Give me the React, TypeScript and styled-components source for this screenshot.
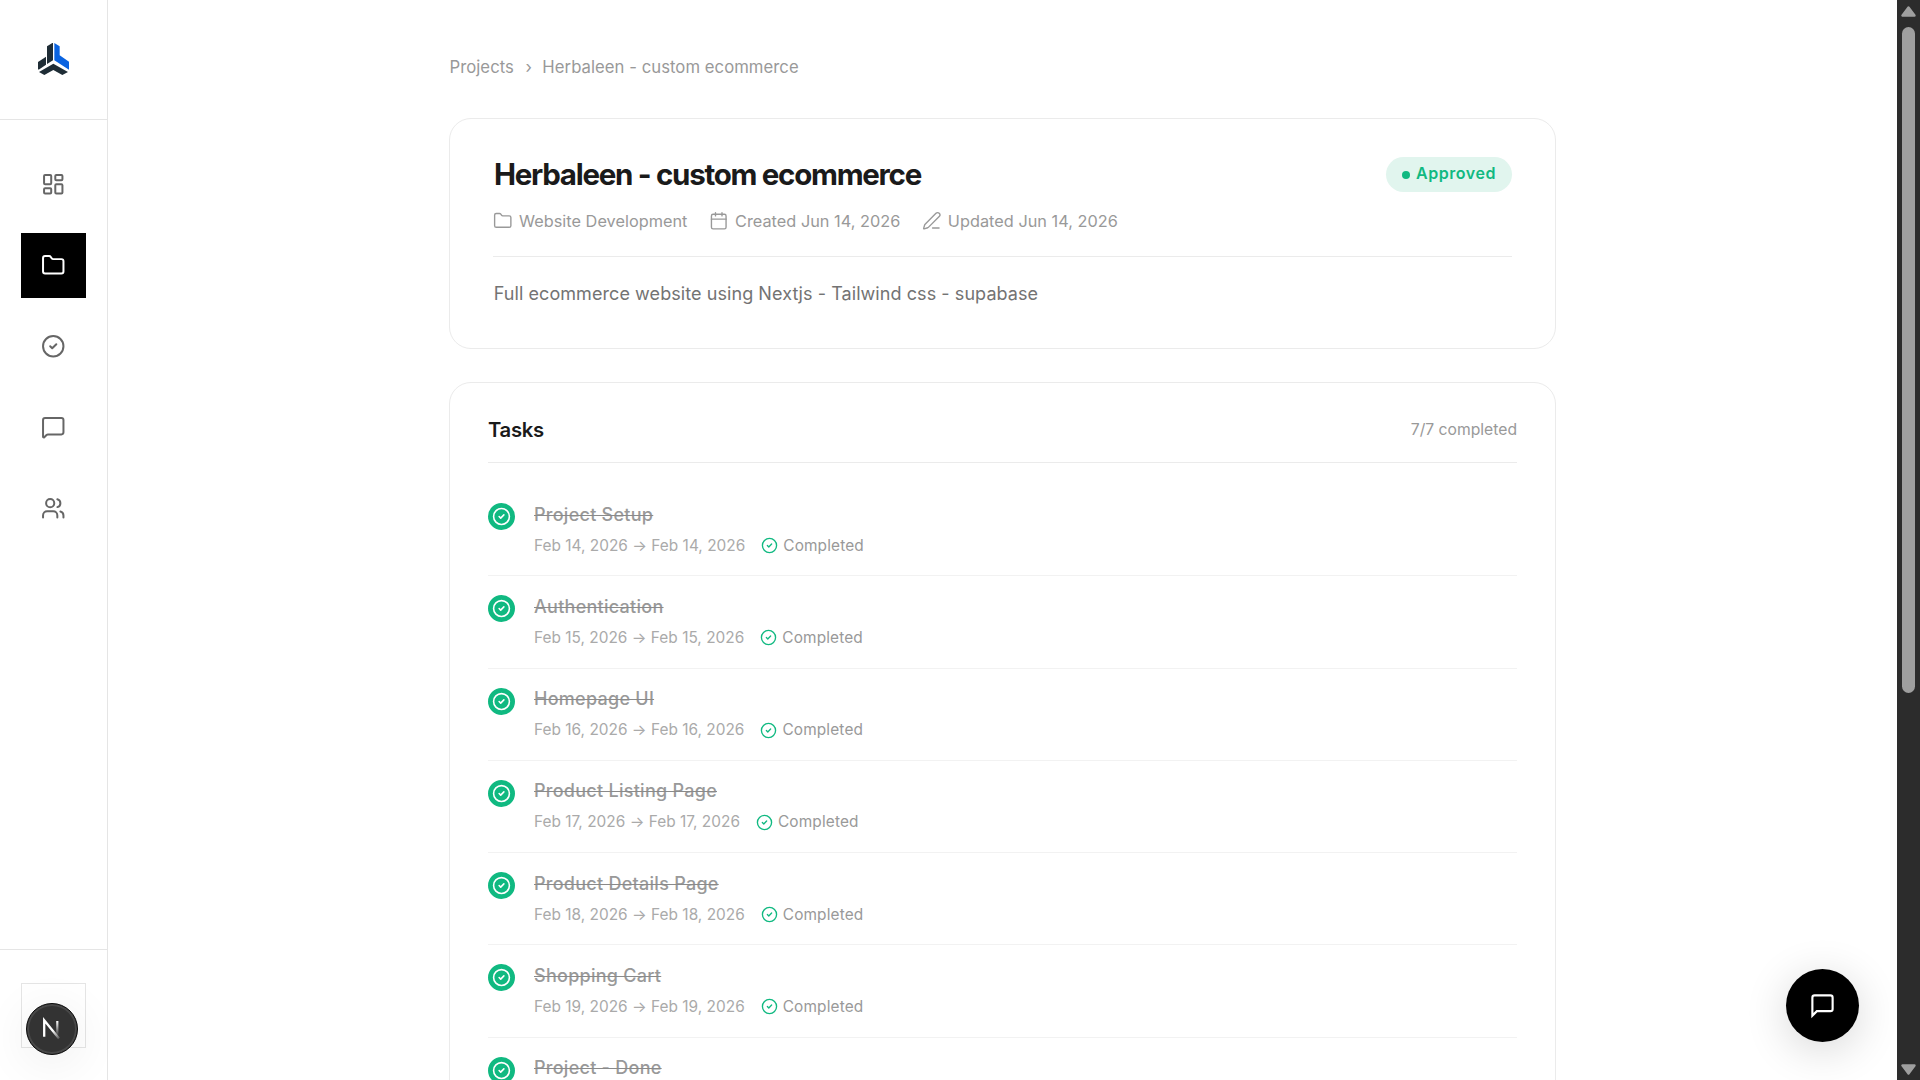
import React from "react";
import styled, { createGlobalStyle, css } from "styled-components";
import {
  Calendar,
  CircleCheck,
  Folder,
  LayoutDashboard,
  MessageSquare,
  PenLine,
  Users,
} from "lucide-react";

const GlobalStyle = createGlobalStyle`
  *, *::before, *::after { box-sizing: border-box; }
  body {
    margin: 0;
    background: #fff;
    font-family: Inter, "Liberation Sans", sans-serif;
    overflow: hidden;
  }
  svg { display: block; flex: none; }
`;

const Shell = styled.div`
  display: grid;
  grid-template-columns: 108px 1fr 23px;
  grid-template-rows: 1080px;
  height: 1080px;
  overflow: hidden;
`;

/* Sidebar */

const Sidebar = styled.aside`
  display: flex;
  flex-direction: column;
  border-right: 1px solid #e5e5e5;
`;

const Brand = styled.div`
  display: flex;
  align-items: center;
  justify-content: center;
  height: 120px;
  padding-bottom: 1px;
  border-bottom: 1px solid #e5e5e5;
`;

const Nav = styled.nav`
  display: flex;
  flex: 1;
  flex-direction: column;
  align-items: center;
  gap: 16px;
  padding-top: 32px;
`;

const NavButton = styled.a<{ $active?: boolean }>`
  display: flex;
  align-items: center;
  justify-content: center;
  width: 65px;
  height: 65px;
  color: #666;
  ${(p) =>
    p.$active &&
    css`
      background: #000;
      color: #fff;
    `}
`;

const SidebarFooter = styled.div`
  display: flex;
  justify-content: center;
  height: 131px;
  padding-top: 33px;
  border-top: 1px solid #e5e5e5;
`;

const AvatarBox = styled.div`
  position: relative;
  width: 65px;
  height: 65px;
  border: 1px solid #e5e5e5;
`;

const DevBadge = styled.div`
  position: absolute;
  top: 18.5px;
  left: 3.5px;
  width: 52px;
  height: 52px;
  border: 1px solid #0c0c0c;
  border-radius: 50%;
  background: #333;
  box-shadow: inset 0 0 0 2px #484848, 0 8px 46px 6px rgba(0, 0, 0, 0.055);
`;

/* Page */

const Main = styled.main`
  display: flex;
  flex-direction: column;
  width: 1107px;
  margin: 0 auto;
  padding-top: 55px;
`;

const Breadcrumb = styled.nav`
  display: flex;
  margin-bottom: 39px;
  padding-left: 0.5px;
  color: #999;
  font-size: 16.7px;
  line-height: 24px;
  letter-spacing: 0.04px;
`;

const Separator = styled.span`
  margin: 0 10.5px 0 11.5px;
`;

const Card = styled.section`
  flex: none;
  border: 1px solid #ebebeb;
  border-radius: 22px;
`;

const ProjectCard = styled(Card)`
  height: 231px;
  margin-bottom: 33px;
  padding: 38px 43px 0;
`;

const ProjectHeader = styled.header`
  display: flex;
  justify-content: space-between;
  height: 35px;
`;

const Title = styled.h1`
  margin: 0;
  padding-left: 1px;
  color: #1a1a1a;
  font-size: 29.5px;
  font-weight: 700;
  line-height: 35px;
  letter-spacing: -1.28px;
`;

const StatusBadge = styled.span`
  display: flex;
  align-items: center;
  gap: 6.5px;
  height: 35px;
  padding: 0 16px;
  border-radius: 18px;
  background: #e1f5ee;
  color: #10b981;
  font-size: 16px;
  font-weight: 600;
  line-height: 32px;
  letter-spacing: 0.54px;

  &::before {
    width: 8px;
    height: 8px;
    border-radius: 50%;
    background: currentColor;
    content: "";
  }
`;

const StatusLabel = styled.span`
  padding-bottom: 3px;
`;

const MetaList = styled.div`
  display: flex;
  gap: 21.5px;
  margin-top: 17px;
`;

const MetaItem = styled.span`
  display: flex;
  align-items: center;
  gap: 6.5px;
  height: 24px;
  color: #999;
  font-size: 16.3px;
  line-height: 24px;
  letter-spacing: 0.02px;
`;

const Description = styled.p`
  margin: 23px 0 0;
  padding: 23px 0 0 0.7px;
  border-top: 1px solid #ebebeb;
  color: #737373;
  font-size: 18px;
  line-height: 28px;
  letter-spacing: 0.07px;
`;

/* Tasks */

const TasksCard = styled(Card)`
  height: 800px;
  padding: 32px 38px 0;
`;

const TasksHeader = styled.header`
  display: flex;
  justify-content: space-between;
  height: 48px;
  margin-bottom: 21px;
  border-bottom: 1px solid #ebebeb;
  line-height: 30px;
`;

const TasksTitle = styled.h2`
  margin: 0;
  color: #1a1a1a;
  font-size: 20.3px;
  font-weight: 600;
  letter-spacing: -0.32px;
`;

const TasksCount = styled.span`
  color: #999;
  font-size: 15.7px;
`;

const TaskRow = styled.article`
  display: flex;
  gap: 19px;
  height: 92.25px;
  padding-top: 17px;
  border-bottom: 1px solid #f2f2f2;
`;

const TaskCheck = styled.span`
  display: flex;
  align-items: center;
  justify-content: center;
  width: 27px;
  height: 27px;
  margin-top: 2px;
  border-radius: 50%;
  background: #10b981;
  color: #fff;
`;

const TaskBody = styled.div`
  padding-top: 0.6px;
`;

const TaskTitle = styled.h3`
  width: max-content;
  margin: 0 0 7px;
  color: #999;
  font-size: 18px;
  font-weight: 500;
  line-height: 26px;
  letter-spacing: 0.27px;
  text-decoration: line-through 1px #8a8a8a;
`;

const TaskMeta = styled.div`
  display: flex;
  align-items: center;
  height: 22px;
  color: #aaa;
  font-size: 15.4px;
  line-height: 22px;
  letter-spacing: 0.02px;
`;

const TaskState = styled.span`
  display: flex;
  align-items: center;
  gap: 5px;
  margin-left: 16px;
  color: #999;
  letter-spacing: 0.14px;

  svg { color: #10b981; }
`;

/* Floating chat button */

const ChatButton = styled.button`
  position: fixed;
  right: 61px;
  bottom: 38px;
  display: flex;
  align-items: center;
  justify-content: center;
  width: 73px;
  height: 73px;
  padding: 0;
  border: 0;
  border-radius: 50%;
  background: #000;
  color: #fff;
  box-shadow: 0 8px 44px rgba(0, 0, 0, 0.16);
`;

/* Scrollbar */

const ScrollTrack = styled.div`
  display: flex;
  flex-direction: column;
  align-items: center;
  z-index: 1;
  padding: 6px 0 5px;
  background: #2c2c2c;
  color: #9f9f9f;
`;

const ScrollThumb = styled.div`
  width: 13px;
  height: 666px;
  margin: 10px 0 auto;
  border-radius: 7px;
  background: currentColor;
`;

const Logo = () => (
  <svg width="33" height="34" viewBox="111 126 99 102">
    <path fill="#1f2d36" d="M141 139 157 129h2v52l-18 11z" />
    <path fill="#1f2d36" d="M114 186 138 170v24l-22 15-2-2z" />
    <path fill="#0a63e0" d="M163 129l16 10v27l28 19v24l-44-28z" />
    <path fill="#1f2d36" d="M160 191l44 25-17 9-27-15-27 15-16-9z" />
  </svg>
);

const DevMark = () => (
  <svg width="50" height="50" viewBox="27 1003 50 50" fill="none">
    <defs>
      <linearGradient id="diag" x1="50" y1="1026" x2="59" y2="1038" gradientUnits="userSpaceOnUse">
        <stop offset=".3" stopColor="#fff" />
        <stop offset="1" stopColor="#fff" stopOpacity=".15" />
      </linearGradient>
      <linearGradient id="stem" x1="57" y1="1020" x2="57" y2="1035" gradientUnits="userSpaceOnUse">
        <stop stopColor="#fff" />
        <stop offset="1" stopColor="#fff" stopOpacity="0" />
      </linearGradient>
    </defs>
    <path d="M57.3 1020v15" stroke="url(#stem)" strokeWidth="2.2" />
    <path d="M59 1037.5 44.2 1019.2v16.6" stroke="url(#diag)" strokeWidth="2.3" />
  </svg>
);

const ChatIcon = () => (
  <svg width="27" height="27" viewBox="0 0 24 24" fill="none" stroke="currentColor" strokeWidth="1.9">
    <path d="M21 15a2 2 0 0 1-2 2H7l-4 4V5a2 2 0 0 1 2-2h14a2 2 0 0 1 2 2z" />
  </svg>
);

const Arrow = ({ down }: { down?: boolean }) => (
  <svg width="15" height="11" viewBox="0 0 15 11">
    <path
      d={down ? "M1.5 1.5h12L7.5 9.5z" : "M1.5 9.5h12L7.5 1.5z"}
      fill="currentColor"
      stroke="currentColor"
      strokeWidth="2.4"
      strokeLinejoin="round"
    />
  </svg>
);

const navItems = [
  { icon: LayoutDashboard },
  { icon: Folder, active: true },
  { icon: CircleCheck },
  { icon: MessageSquare },
  { icon: Users },
];

const tasks: { title: string; date?: string }[] = [
  { title: "Project Setup", date: "Feb 14, 2026" },
  { title: "Authentication", date: "Feb 15, 2026" },
  { title: "Homepage UI", date: "Feb 16, 2026" },
  { title: "Product Listing Page", date: "Feb 17, 2026" },
  { title: "Product Details Page", date: "Feb 18, 2026" },
  { title: "Shopping Cart", date: "Feb 19, 2026" },
  { title: "Project - Done" },
];

export default function App() {
  return (
    <>
      <GlobalStyle />
      <Shell>
        <Sidebar>
          <Brand>
            <Logo />
          </Brand>
          <Nav>
            {navItems.map(({ icon: Icon, active }, i) => (
              <NavButton key={i} $active={active}>
                <Icon size={24.5} strokeWidth={1.95} />
              </NavButton>
            ))}
          </Nav>
          <SidebarFooter>
            <AvatarBox>
              <DevBadge>
                <DevMark />
              </DevBadge>
            </AvatarBox>
          </SidebarFooter>
        </Sidebar>

        <Main>
          <Breadcrumb>
            <span>Projects</span>
            <Separator>›</Separator>
            <span>Herbaleen - custom ecommerce</span>
          </Breadcrumb>

          <ProjectCard>
            <ProjectHeader>
              <Title>Herbaleen - custom ecommerce</Title>
              <StatusBadge>
                <StatusLabel>Approved</StatusLabel>
              </StatusBadge>
            </ProjectHeader>
            <MetaList>
              <MetaItem>
                <Folder size={19.5} strokeWidth={1.7} />
                Website Development
              </MetaItem>
              <MetaItem>
                <Calendar size={19.5} strokeWidth={1.7} />
                Created Jun 14, 2026
              </MetaItem>
              <MetaItem>
                <PenLine size={19.5} strokeWidth={1.7} />
                Updated Jun 14, 2026
              </MetaItem>
            </MetaList>
            <Description>
              Full ecommerce website using Nextjs - Tailwind css - supabase
            </Description>
          </ProjectCard>

          <TasksCard>
            <TasksHeader>
              <TasksTitle>Tasks</TasksTitle>
              <TasksCount>7/7 completed</TasksCount>
            </TasksHeader>
            {tasks.map(({ title, date }) => (
              <TaskRow key={title}>
                <TaskCheck>
                  <CircleCheck size={19} strokeWidth={2} />
                </TaskCheck>
                <TaskBody>
                  <TaskTitle>{title}</TaskTitle>
                  {date && (
                    <TaskMeta>
                      {date} → {date}
                      <TaskState>
                        <CircleCheck size={17} strokeWidth={1.9} />
                        Completed
                      </TaskState>
                    </TaskMeta>
                  )}
                </TaskBody>
              </TaskRow>
            ))}
          </TasksCard>
        </Main>

        <ScrollTrack>
          <Arrow />
          <ScrollThumb />
          <Arrow down />
        </ScrollTrack>
      </Shell>
      <ChatButton aria-label="Chat">
        <ChatIcon />
      </ChatButton>
    </>
  );
}
